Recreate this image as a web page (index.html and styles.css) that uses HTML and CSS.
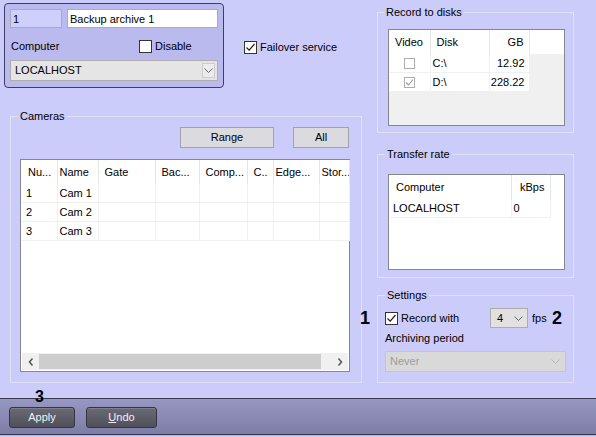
FILE: index.html
```html
<!DOCTYPE html>
<html lang="en">
<head>
  <meta charset="UTF-8">
  <title>Backup archive 1</title>
  <link rel="stylesheet" href="styles.css">
</head>
<body>
  <div class="window">
    <main class="content">
      <div class="left-col">
        <div class="top-row">
          <div class="archive-panel">
            <div class="name-row">
              <input class="field field-id" type="text" value="1">
              <input class="field field-name" type="text" value="Backup archive 1">
            </div>
            <div class="computer-row">
              <span class="computer-label">Computer</span>
              <label class="check"><span class="box"></span>Disable</label>
            </div>
            <div class="combo combo-host">
              <span>LOCALHOST</span>
              <span class="drop-btn">
                <svg width="9" height="5" viewBox="0 0 9 5"><path d="M0.5 0.5 L4.5 4.5 L8.5 0.5" fill="none" stroke="#666"/></svg>
              </span>
            </div>
          </div>
          <label class="check failover">
            <span class="box">
              <svg width="11" height="11" viewBox="0 0 11 11"><path d="M1.5 5.5 L4.2 8.2 L9.5 2" fill="none" stroke="#222" stroke-width="1.2"/></svg>
            </span>Failover service
          </label>
        </div>

        <fieldset class="group cameras">
          <legend>Cameras</legend>
          <div class="cam-buttons">
            <button class="btn btn-range">Range</button>
            <button class="btn btn-all">All</button>
          </div>
          <div class="list cam-list">
            <table class="grid">
              <colgroup>
                <col class="w36"><col class="w41"><col class="w57"><col class="w44">
                <col class="w48"><col class="w26"><col class="w46"><col class="w30">
              </colgroup>
              <thead>
                <tr>
                  <th class="wide">Nu...</th><th class="tight">Name</th><th>Gate</th><th>Bac...</th>
                  <th>Comp...</th><th>C..</th><th class="tight">Edge...</th><th class="tight">Stor...</th>
                </tr>
              </thead>
              <tbody>
                <tr><td class="first">1</td><td>Cam 1</td><td></td><td></td><td></td><td></td><td></td><td></td></tr>
                <tr><td class="first">2</td><td>Cam 2</td><td></td><td></td><td></td><td></td><td></td><td></td></tr>
                <tr><td class="first">3</td><td>Cam 3</td><td></td><td></td><td></td><td></td><td></td><td></td></tr>
              </tbody>
            </table>
            <div class="hscroll">
              <span class="arrow">
                <svg width="6" height="8" viewBox="0 0 6 8"><path d="M4.5 0.5 L1.5 4 L4.5 7.5" fill="none" stroke="#555" stroke-width="1.5"/></svg>
              </span>
              <span class="thumb"></span>
              <span class="track"></span>
              <span class="arrow">
                <svg width="6" height="8" viewBox="0 0 6 8"><path d="M1.5 0.5 L4.5 4 L1.5 7.5" fill="none" stroke="#555" stroke-width="1.5"/></svg>
              </span>
            </div>
          </div>
        </fieldset>
      </div>

      <div class="right-col">
        <fieldset class="group disks">
          <legend>Record to disks</legend>
          <div class="list disk-list">
            <table class="grid">
              <colgroup><col class="w41"><col class="w59"><col class="w40"><col></colgroup>
              <thead>
                <tr><th>Video</th><th>Disk</th><th class="num">GB</th><th class="last"></th></tr>
              </thead>
              <tbody>
                <tr>
                  <td class="center"><span class="box dim"></span></td>
                  <td>C:\</td><td class="num">12.92</td><td class="empty"></td>
                </tr>
                <tr>
                  <td class="center"><span class="box dim">
                    <svg width="9" height="9" viewBox="0 0 9 9"><path d="M1 4.5 L3.5 7 L8 1.5" fill="none" stroke="#999" stroke-width="1.1"/></svg>
                  </span></td>
                  <td>D:\</td><td class="num">228.22</td><td class="empty"></td>
                </tr>
              </tbody>
            </table>
          </div>
        </fieldset>

        <fieldset class="group transfer">
          <legend>Transfer rate</legend>
          <div class="list rate-list">
            <table class="grid">
              <colgroup><col class="w122"><col class="w39"><col></colgroup>
              <thead>
                <tr><th class="wide">Computer</th><th class="num">kBps</th><th class="last"></th></tr>
              </thead>
              <tbody>
                <tr><td class="host">LOCALHOST</td><td>0</td><td class="empty"></td></tr>
              </tbody>
            </table>
          </div>
        </fieldset>

        <fieldset class="group settings">
          <legend>Settings</legend>
          <div class="fps-row">
            <label class="check record">
              <span class="box">
                <svg width="11" height="11" viewBox="0 0 11 11"><path d="M1.5 5.5 L4.2 8.2 L9.5 2" fill="none" stroke="#222" stroke-width="1.2"/></svg>
              </span>Record with
            </label>
            <div class="combo combo-fps">
              <span>4</span>
              <svg width="9" height="5" viewBox="0 0 9 5"><path d="M0.5 0.5 L4.5 4.5 L8.5 0.5" fill="none" stroke="#666"/></svg>
            </div>
            <span class="fps">fps</span>
          </div>
          <div class="period-label">Archiving period</div>
          <div class="combo combo-never">
            <span>Never</span>
            <svg width="9" height="5" viewBox="0 0 9 5"><path d="M0.5 0.5 L4.5 4.5 L8.5 0.5" fill="none" stroke="#b8b8b8"/></svg>
          </div>
        </fieldset>
      </div>
    </main>

    <footer class="bottom-bar">
      <button class="dark-btn apply">Apply</button>
      <button class="dark-btn undo"><u>U</u>ndo</button>
    </footer>
    <div class="bottom-strip"></div>

    <span class="mark mark-1">1</span>
    <span class="mark mark-2">2</span>
    <span class="mark mark-3">3</span>
  </div>
</body>
</html>
```

FILE: styles.css
```css
body {
  margin: 0;
  font-family: 'Liberation Sans', Arial, sans-serif;
  font-size: 11px;
  line-height: 13px;
  color: #000;
  background-color: #ccccfa;
  width: 596px;
  height: 437px;
  overflow: hidden;
}
.window {
  position: relative;
  height: 437px;
  display: flex;
  flex-direction: column;
}
.content { display: flex; height: 398px; }
.left-col { width: 377px; }
.right-col { width: 197px; display: flex; flex-direction: column; }

/* top panel */
.top-row { display: flex; align-items: flex-start; padding: 3px 0 0 4px; }
.archive-panel {
  width: 220px; height: 85px; box-sizing: border-box;
  border: 1px solid #3e3e62; border-radius: 4px;
  background-color: #babaee;
  padding: 5px 5px 0 5px;
}
.name-row { display: flex; gap: 5px; }
.field {
  font: inherit; margin: 0; height: 19px; box-sizing: border-box;
  padding: 0 2px; border: 1px solid #a9a9bf; color: #000;
}
.field-id { width: 52px; background-color: #cfcffc; }
.field-name { flex: 1; min-width: 0; background-color: #fff; border-color: #acacac; }
.computer-row { display: flex; align-items: center; margin-top: 12px; height: 13px; }
.computer-label { width: 128px; padding-left: 1px; }

.check { display: flex; align-items: center; gap: 3px; }
.box {
  width: 13px; height: 13px; box-sizing: border-box;
  border: 1px solid #333; background-color: #fff;
  display: inline-flex; align-items: center; justify-content: center;
}
.box.dim { width: 11px; height: 11px; border-color: #adadad; }
.failover { margin: 38px 0 0 20px; }

.combo {
  display: flex; align-items: center; justify-content: space-between;
  box-sizing: border-box; height: 21px;
  border: 1px solid #adadad; background-color: #e5e5e5;
}
.combo-host { margin-top: 7px; padding: 0 2px 0 4px; }
.drop-btn {
  width: 13px; height: 15px; box-sizing: border-box;
  border: 1px solid #cdcdcd; background-color: #ececec;
  display: flex; align-items: center; justify-content: center;
}

/* group boxes */
.group {
  margin: 0; box-sizing: border-box; min-width: 0;
  border: 1px solid #e0e0f6;
}
.group legend { padding: 0 2px; line-height: 13px; }
.cameras {
  width: 352px; height: 273px;
  margin: 22px 0 0 10px;
  padding: 4px 11px 10px 9px;
}
.cameras legend { margin-left: -2px; }
.cam-buttons { display: flex; justify-content: flex-end; gap: 19px; margin-right: 1px; }
.btn {
  font: inherit; margin: 0; height: 21px; padding: 0;
  border: 1px solid #a2a2aa; background-color: #dadadf; color: #000;
}
.btn-range { width: 94px; }
.btn-all { width: 56px; }

.list { box-sizing: border-box; border: 1px solid #828790; }
.cam-list {
  margin-top: 11px; height: 213px; background-color: #fff;
  display: flex; flex-direction: column; justify-content: space-between;
}
.grid { border-collapse: collapse; table-layout: fixed; width: 100%; }
.w26 { width: 26px; }
.w30 { width: 30px; }
.w36 { width: 36px; }
.w39 { width: 39px; }
.w40 { width: 40px; }
.w41 { width: 41px; }
.w44 { width: 44px; }
.w46 { width: 46px; }
.w48 { width: 48px; }
.w57 { width: 57px; }
.w59 { width: 59px; }
.w122 { width: 122px; }
.grid th {
  height: 24px; padding: 0 0 0 6px; font-weight: normal; text-align: left;
  background-color: #fff; border-right: 1px solid #e5e5e5;
  white-space: nowrap; overflow: hidden;
}
.grid th.wide { padding-left: 7px; }
.grid th.tight { padding-left: 2px; }
.grid th.num { text-align: right; padding: 0 5px 0 0; }
.grid th.last { border-right: none; }
.grid td {
  height: 18px; padding: 0 0 0 2px; background-color: #fff;
  border: 1px solid #f0f0f0; border-top: none;
  white-space: nowrap; overflow: hidden;
}
.grid td.first { padding-left: 5px; border-left: none; }
.grid td.num { text-align: right; padding: 0 4px 0 0; }
.grid td.center { text-align: center; padding: 0; border-left: none; }
.grid td.center .box { vertical-align: middle; }
.grid td.empty { background-color: transparent; border: none; }
.grid td.host { padding-left: 4px; border-left: none; }

.hscroll { display: flex; height: 17px; background-color: #f0f0f0; margin: 0 1px 1px; }
.hscroll .arrow { width: 17px; display: flex; align-items: center; justify-content: center; }
.hscroll .thumb { width: 282px; margin: 1px 0; background-color: #cdcdcd; }
.hscroll .track { flex: 1; }

.disks { margin-top: 6px; padding: 10px 8px 6px 10px; }
.disks legend { margin-left: -4px; }
.disk-list { height: 97px; background-color: #f0f0f0; }
.transfer { margin-top: 15px; padding: 13px 8px 7px 10px; }
.transfer legend { margin-left: -3px; }
.rate-list { height: 96px; background-color: #fff; }

.settings { margin-top: 11px; padding: 6px 7px 10px 7px; }
.fps-row { display: flex; align-items: center; height: 20px; }
.record { width: 105px; }
.combo-fps { width: 38px; height: 20px; padding: 0 4px 0 6px; background-color: #e1e1e1; }
.fps { margin-left: 4px; }
.period-label { margin-top: 4px; }
.combo-never {
  margin-top: 6px; padding: 0 5px 0 4px;
  background-color: #d9d9d9; border-color: #c6c6c6; color: #9d9d9d;
}

/* bottom bar */
.bottom-bar {
  height: 27px;
  border-top: 1px solid #3a3a4e;
  border-bottom: 1px solid #33334a;
  background: linear-gradient(#9797c3, #7d7da7);
  display: flex; align-items: flex-start; gap: 11px;
  padding: 8px 0 0 9px;
}
.bottom-strip { height: 1px; background-color: #b8b8de; }
.dark-btn {
  font: inherit; margin: 0; height: 21px; padding: 0;
  border: 1px solid #35353f; border-radius: 3px;
  background: linear-gradient(#6a6a76, #50505b);
  box-shadow: inset 0 1px 0 rgba(255,255,255,0.15);
  color: #f0f0f4;
}
.apply { width: 66px; }
.undo { width: 71px; }

/* callout numbers */
.mark { position: absolute; font-weight: bold; line-height: 1; }
.mark-1 { left: 360px; top: 309px; font-size: 18px; }
.mark-2 { left: 552px; top: 309px; font-size: 18px; }
.mark-3 { left: 35px; top: 389px; font-size: 16px; }
```
